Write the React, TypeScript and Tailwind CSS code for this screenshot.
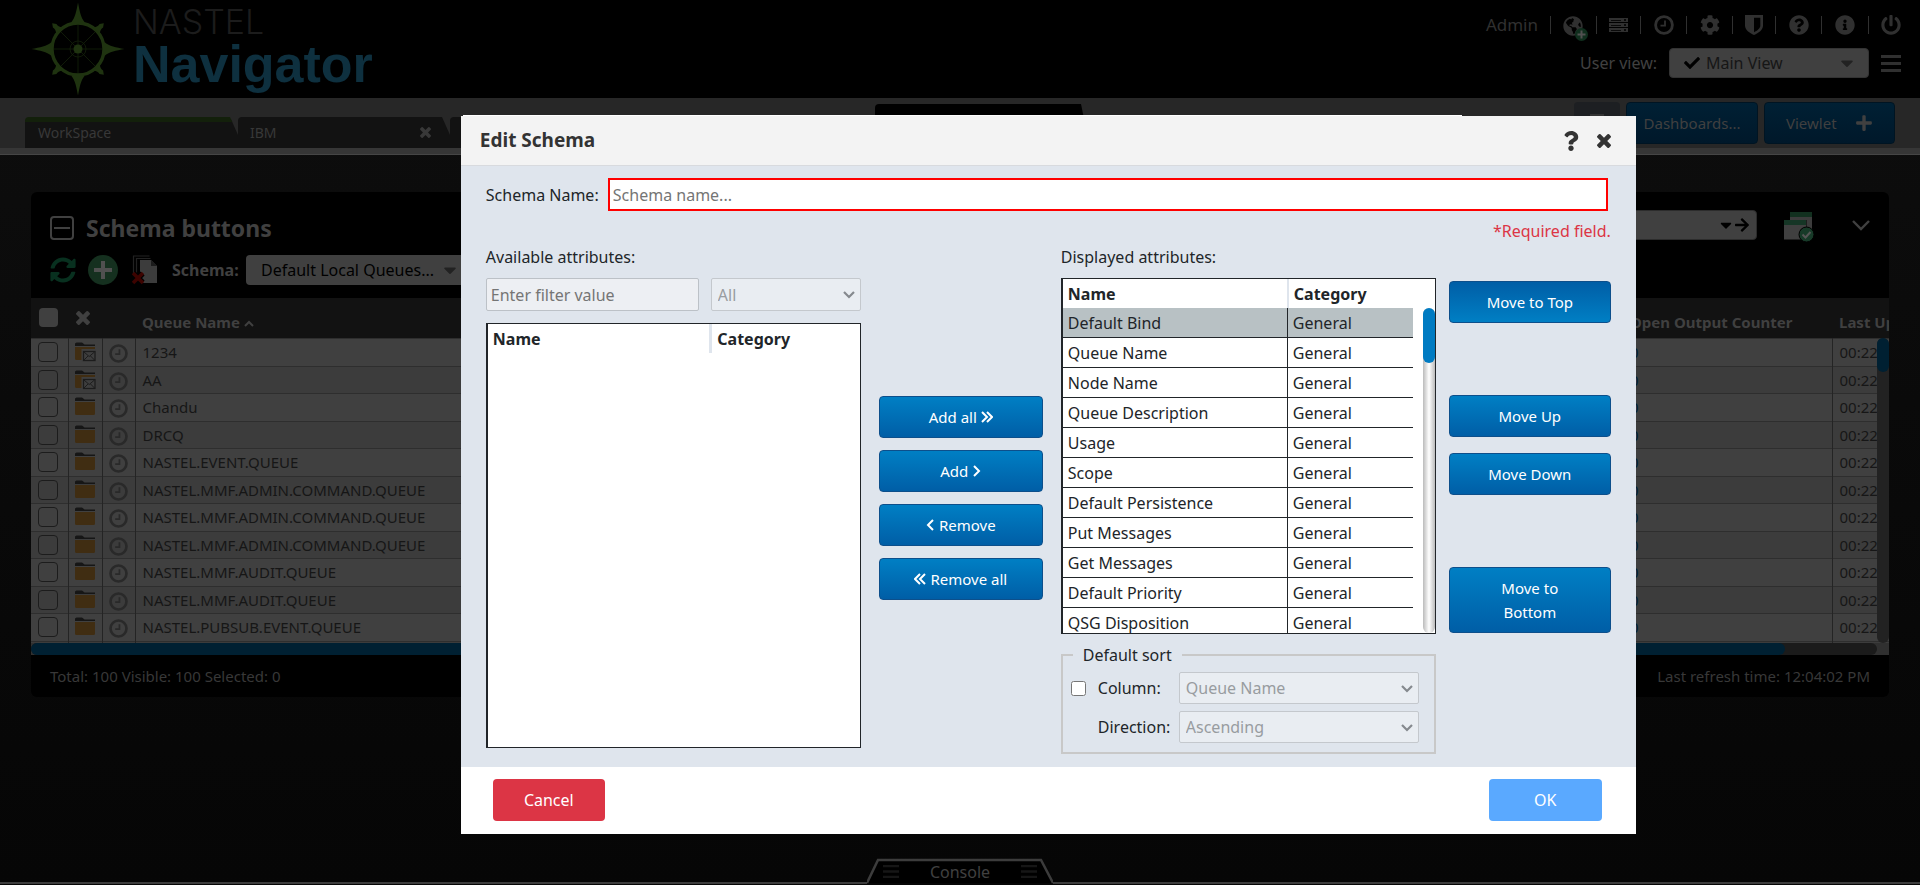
import React from "react";
import {
  FaCheck, FaCog, FaInfoCircle, FaPlus, FaPowerOff, FaQuestion, FaQuestionCircle,
  FaSyncAlt, FaArrowRight, FaCaretDown, FaGlobeAmericas,
} from "react-icons/fa";

function Cross({ className }: { className: string }) {
  return (
    <svg className={className} viewBox="110 366 1188 1188" fill="currentColor" aria-hidden="true">
      <path d="M1298 1322q0 40-28 68l-136 136q-28 28-68 28t-68-28l-294-294-294 294q-28 28-68 28t-68-28l-136-136q-28-28-28-68t28-68l294-294-294-294q-28-28-28-68t28-68l136-136q28-28 68-28t68 28l294 294 294-294q28-28 68-28t68 28l136 136q28 28 28 68t-28 68l-294 294 294 294q28 28 28 68z" />
    </svg>
  );
}

function Clock({ className }: { className: string }) {
  return (
    <svg className={className} viewBox="0 0 20 20" fill="none" stroke="currentColor" aria-hidden="true">
      <circle cx="10" cy="10" r="8.4" strokeWidth="2.8" />
      <path d="M11 5.5v5.2H6.5" strokeWidth="1.8" />
    </svg>
  );
}

function Bars({ className }: { className: string }) {
  return (
    <svg className={className} viewBox="0 0 20 17" fill="currentColor" preserveAspectRatio="none" aria-hidden="true">
      <path d="M0 0h20v3H0zM0 7h20v3H0zM0 14h20v3H0z" />
    </svg>
  );
}

function Servers() {
  return (
    <svg className="h-[15px] w-[19px]" viewBox="0 0 19 15" shapeRendering="crispEdges" aria-hidden="true">
      {[0, 5, 10].map((y) => (
        <g key={y}>
          <rect x="0" y={y} width="19" height="4" fill="#303030" />
          <rect x="2" y={y + 2} width="10" height="1" fill="#0a0a0a" />
          <rect x="15" y={y + 1} width="2" height="2" fill="#0a0a0a" />
        </g>
      ))}
    </svg>
  );
}

function Shield() {
  return (
    <svg className="h-5 w-[18px]" viewBox="0 0 18 20" aria-hidden="true">
      <path d="M0 0h18v10.500c0 4.500-4.500 7.500-9 9.500C4.500 18 0 15 0 10.500z" fill="currentColor" />
      <path d="M9 2.700h6.300v8c0 2.600-3 4.800-6.300 6.500z" fill="#000" />
    </svg>
  );
}

function Globe() {
  return (
    <svg className="h-[26px] w-[26px]" viewBox="0 0 26 26" aria-hidden="true">
      <FaGlobeAmericas x="0" y="0" size={20} color="#303030" />
      <circle cx="18.500" cy="18.500" r="6.500" fill="#0f2e1d" />
      <path d="M18.500 14.500v8M14.500 18.500h8" stroke="#505050" strokeWidth="2" />
    </svg>
  );
}

function Compass() {
  return (
    <svg className="h-[94px] w-[94px]" viewBox="-47 -47 94 94" fill="none" stroke="#1f3310" aria-hidden="true">
      <circle r="26" strokeWidth="3.400" />
      <g strokeWidth="0.800" opacity="0.65">
        <path d="M0-25V25M-25 0H25M-18-18L18 18M18-18L-18 18" />
        <circle r="8" />
      </g>
      <circle r="4.500" fill="#1f3310" stroke="none" />
      {[0, 90, 180, 270].map((a) => (
        <g key={a} transform={`rotate(${a})`} fill="#1f3310" stroke="none">
          <path d="M-6.500-27C-3-31-1.500-38 0-46.500 1.500-38 3-31 6.500-27z" />
          <path transform="rotate(45)" d="M-5-26C-2.500-28-2-31-2.500-33L0-36.500 2.500-33C2-31 2.500-28 5-26z" />
        </g>
      ))}
    </svg>
  );
}

function Folder({ mail }: { mail?: boolean }) {
  return (
    <svg className="mx-auto block h-[20px] w-[21px]" viewBox="0 0 21 20" aria-hidden="true">
      <path d="M0 4V1.500L1.500.5H7l2.500 2H20v1.500z" fill="#161616" />
      <path d="M0 5h20v11.500q0 1.500-1.500 1.500h-17Q0 18 0 16.500z" fill="#402d12" />
      {mail && (
        <g>
          <rect x="6.500" y="7" width="14.500" height="13" fill="#3e3e3e" />
          <rect x="8.500" y="9.500" width="11.500" height="9" fill="none" stroke="#1c1c1c" strokeWidth="1.200" />
          <path d="M9 10l5.200 4.500L19.500 10M9 18l4-4M19.500 18l-4-4" stroke="#1c1c1c" fill="none" />
        </g>
      )}
    </svg>
  );
}

function Documents() {
  return (
    <svg className="h-[30px] w-[26px]" viewBox="0 0 26 30" aria-hidden="true">
      <path d="M1.500 20V1h16M4.500 20V3.500h14" fill="none" stroke="#222" strokeWidth="1.200" />
      <path d="M8 5h11l6 6v17H8z" fill="#3c3c3c" />
      <path d="M19 5v6h6z" fill="#1b1b1b" />
      <path d="M1.500 18.500l9 9M10.500 18.500l-9 9" stroke="#000" strokeWidth="6" />
      <path d="M1 18l10 10M11 18L1 28" stroke="#3d0300" strokeWidth="3.600" />
    </svg>
  );
}

function Windows() {
  return (
    <svg className="h-[30px] w-[30px]" viewBox="0 0 30 30" aria-hidden="true">
      <path d="M6 0h22v20H6z" fill="#3c3c3c" />
      <path d="M6 0h22v5H6z" fill="#12301f" />
      <path d="M0 8h22.500v20H0z" fill="#000" />
      <path d="M0 8h22v19.500H0z" fill="#404040" />
      <path d="M0 8h22v5H0z" fill="#163626" />
      <circle cx="22.500" cy="22.500" r="7.500" fill="#173a28" stroke="#000" />
      <path d="M18.500 22.500l3 3 5-5.500" fill="none" stroke="#555" strokeWidth="2" />
    </svg>
  );
}

function Chevron({ d, className, box = "0 0 12 12", w = "2" }: { d: string; className: string; box?: string; w?: string }) {
  return (
    <svg className={className} viewBox={box} fill="none" stroke="currentColor" strokeWidth={w} aria-hidden="true">
      <path d={d} />
    </svg>
  );
}

const topIcons = [
  { name: "Servers", icon: <Servers />, w: "w-11" },
  { name: "Schedules", icon: <Clock className="h-5 w-5" />, w: "w-[46px]" },
  { name: "Settings", icon: <FaCog className="h-5 w-5" />, w: "w-[46px]" },
  { name: "Security", icon: <Shield />, w: "w-[43px]" },
  { name: "Help", icon: <FaQuestionCircle className="h-5 w-5" />, w: "w-[46px]" },
  { name: "About", icon: <FaInfoCircle className="h-5 w-5" />, w: "w-[47px]" },
];

const queues = [
  "1234", "AA", "Chandu", "DRCQ", "NASTEL.EVENT.QUEUE",
  "NASTEL.MMF.ADMIN.COMMAND.QUEUE", "NASTEL.MMF.ADMIN.COMMAND.QUEUE", "NASTEL.MMF.ADMIN.COMMAND.QUEUE",
  "NASTEL.MMF.AUDIT.QUEUE", "NASTEL.MMF.AUDIT.QUEUE", "NASTEL.PUBSUB.EVENT.QUEUE",
];

const attributes = [
  "Default Bind", "Queue Name", "Node Name", "Queue Description", "Usage", "Scope",
  "Default Persistence", "Put Messages", "Get Messages", "Default Priority", "QSG Disposition",
];

function Header() {
  return (
    <header className="flex h-[98px] justify-between bg-black">
      <div className="flex pl-[31px] pt-[2px]">
        <Compass />
        <div className="ml-2">
          <div className="mt-[3px] font-['Inter',sans-serif] text-[34px] font-light leading-[33px] text-[#1c1c1c]">NASTEL</div>
          <div className="font-['Liberation_Sans',sans-serif] text-[52px] font-bold leading-[52px] text-[#0e303f]">Navigator</div>
        </div>
      </div>
      <div className="pr-[19px] pt-3 text-[#303030]">
        <div className="flex h-[26px] items-center justify-end">
          <span className="pr-[12px] text-[17px]">Admin</span>
          <button aria-label="Add server" className="flex h-[18px] w-[46px] items-center justify-center border-l border-[#303030] pl-1 pt-2">
            <Globe />
          </button>
          {topIcons.map((t) => (
            <button key={t.name} aria-label={t.name} className={`flex h-[18px] items-center justify-center border-l border-[#303030] ${t.w}`}>
              {t.icon}
            </button>
          ))}
          <button aria-label="Log out" className="flex h-[18px] w-[33px] items-center justify-end border-l border-[#303030]">
            <FaPowerOff className="h-5 w-5" />
          </button>
        </div>
        <div className="mt-[10px] flex h-[30px] items-center justify-end">
          <span className="mr-3 text-[16px] text-[#404040]">User view:</span>
          <button className="flex h-[30px] w-[200px] items-center rounded border border-[#333] bg-[#404040] pl-[14px] pr-[13px] text-[16px] text-[#161616]">
            <FaCheck className="mr-[6px] h-4 w-4 text-black" />
            Main View
            <FaCaretDown className="ml-auto h-5 w-4 text-[#222]" />
          </button>
          <button aria-label="Menu" className="ml-3"><Bars className="h-[17px] w-5" /></button>
        </div>
      </div>
    </header>
  );
}

function TabBar() {
  const tab = "flex h-[31px] items-center rounded-tl bg-[#121212] text-[14px] text-[#383838] [clip-path:polygon(0_0,calc(100%-8px)_0,100%_18px,100%_100%,0_100%)]";
  return (
    <nav className="flex h-[57px] items-end justify-between border-b border-[#464646] bg-[linear-gradient(#272727_50px,#363636_50px)] pb-[6px] pl-[25px] pr-[25px]">
      <div className="flex flex-1">
        <a href="#workspace" className={`${tab} w-[213px] border-t-[5px] border-[#13200b] pb-[6px] pl-[13px]`}>WorkSpace</a>
        <a href="#ibm" className={`${tab} w-[212px] justify-between pl-3 pr-[19px]`}>
          IBM <Cross className="h-[11px] w-[11px]" />
        </a>
        <span className={`${tab} w-[213px]`} />
      </div>
      <div className="mr-[484px] h-[44px] w-[215px] self-end rounded-tl bg-black [clip-path:polygon(0_0,206px_0,100%_100%,0_100%)]" />
      <div className="flex gap-[6px] self-start pt-[4px] text-[16px] text-[#404040]">
        <button aria-label="Collapse" className="flex h-[42px] w-[46px] justify-center rounded bg-[#1d1f22] pt-3">
          <span className="h-[3px] w-[14px] bg-[#333]" />
        </button>
        <button className="h-[42px] w-[132px] rounded border border-[#001422] bg-linear-to-b from-[#002034] to-[#00182a] text-[15px]">Dashboards...</button>
        <button className="flex h-[42px] w-[131px] items-center justify-between rounded border border-[#001422] bg-linear-to-b from-[#002034] to-[#00182a] pl-[21px] pr-[21px] text-[15px]">
          Viewlet <FaPlus className="h-[18px] w-[18px]" />
        </button>
      </div>
    </nav>
  );
}

function Viewlet() {
  return (
    <section className="relative ml-[31px] mr-[31px] mt-[37px] overflow-hidden rounded-md bg-black">
      <div className="flex h-[106px] justify-between pl-[19px] pr-[19px] text-[#404040]">
        <div>
          <div className="mt-[18px] flex h-9 items-center">
            <button aria-label="Collapse viewlet" className="mr-3 flex h-6 w-6 items-center justify-center rounded border-2 border-[#404040]">
              <span className="h-[2px] w-4 bg-[#404040]" />
            </button>
            <h2 className="text-[23px] font-bold">Schema buttons</h2>
          </div>
          <div className="mt-[9px] flex h-[30px] items-center">
            <button aria-label="Refresh"><FaSyncAlt className="h-[26px] w-[26px] text-[#08301f]" /></button>
            <button aria-label="Add" className="ml-3 flex h-[30px] w-[30px] items-center justify-center rounded-full bg-[#15301f] text-[#505050]">
              <svg className="h-[18px] w-[18px]" viewBox="0 0 18 18" stroke="currentColor" strokeWidth="4" aria-hidden="true"><path d="M9 0v18M0 9h18" /></svg>
            </button>
            <button aria-label="Delete schema" className="ml-[14px]"><Documents /></button>
            <span className="ml-[14px] w-[74px] text-[16px] font-bold">Schema:</span>
            <button className="flex h-[30px] w-[300px] items-center rounded bg-[#404040] pl-[15px] text-[16px] text-black">
              Default Local Queues...
              <FaCaretDown className="ml-2 h-5 w-4 text-[#222]" />
            </button>
          </div>
        </div>
        <div className="flex h-[30px] items-center pt-[33px]">
          <button aria-label="Search" className="flex h-[30px] w-[400px] items-center justify-end rounded border border-[#2c2c2c] bg-[#404040] pr-[6px] text-black">
            <FaCaretDown className="h-[18px] w-4" />
            <FaArrowRight className="h-4 w-4" />
          </button>
          <button aria-label="Apply to windows" className="ml-[27px] mt-1"><Windows /></button>
          <button aria-label="Expand" className="ml-[38px]"><Chevron d="M1 1l8 8 8-8" box="0 0 18 11" w="2.4" className="h-[11px] w-[18px]" /></button>
        </div>
      </div>
      <div className="relative h-[357px] overflow-hidden bg-[#303030]">
        <div className="h-[345px] overflow-hidden">
          <table className="w-full table-fixed border-collapse text-[15px] text-[#161616]">
            <colgroup>
              <col className="w-[37px]" /><col className="w-[34px]" /><col className="w-[33px]" /><col />
              <col className="w-[209px]" /><col className="w-[57px]" />
            </colgroup>
            <thead className="h-10 border-b border-[#2e2e2e] bg-[#121212] text-left text-[#404040]">
              <tr className="h-10">
                <th className="pl-2"><input type="checkbox" aria-label="Select all" className="block h-[19px] w-[19px] appearance-none rounded-sm bg-[#404040]" /></th>
                <th className="pl-2"><Cross className="h-[14px] w-[14px]" /></th>
                <th />
                <th className="pl-[7px] pt-2 leading-5">Queue Name<Chevron d="M1 6l4-4 4 4" box="0 0 10 8" className="ml-1 inline h-2 w-[10px]" /></th>
                <th className="whitespace-nowrap pl-[7px] pt-2 leading-5">Open Output Counter</th>
                <th className="overflow-hidden whitespace-nowrap pl-[7px] pt-2 leading-5">Last Update</th>
              </tr>
            </thead>
            <tbody>
              {queues.map((q, i) => (
                <tr key={i} className="h-[28px] border-b border-[#2e2e2e] odd:bg-[#404040] even:h-[27px] even:bg-[#3c3c3c]">
                  <td className="border-r border-[#242424] pl-[7px]"><input type="checkbox" aria-label={q} className="block h-5 w-5 appearance-none rounded border border-[#1c1c1c]" /></td>
                  <td className="border-r border-[#242424]"><Folder mail={i < 2} /></td>
                  <td className="border-r border-[#242424]"><Clock className="mx-auto mt-[3px] block h-[19px] w-[19px] text-[#292929]" /></td>
                  <td className="pl-[7px] leading-5">{q}</td>
                  <td className="border-r border-[#242424] pl-[7px] leading-5 text-[#002038]">0</td>
                  <td className="overflow-hidden pl-[7px] leading-5">00:22</td>
                </tr>
              ))}
              <tr className="h-[28px] bg-[#3c3c3c]"><td className="border-r border-[#242424]" /><td className="border-r border-[#242424]" /><td className="border-r border-[#242424]" /><td /><td className="border-r border-[#242424]" /><td /></tr>
            </tbody>
          </table>
        </div>
        <div className="absolute right-0 top-10 h-[305px] w-3 rounded-md bg-[#222]"><div className="h-[34px] rounded-md bg-[#002032]" /></div>
        <div className="mr-3 h-3 rounded-md bg-[#1b1b1b]"><div className="h-3 w-[95%] rounded-md bg-[#002032]" /></div>
      </div>
      <footer className="flex h-[42px] items-center justify-between pl-[19px] pr-[19px] text-[15px] text-[#383838]">
        <span>Total: 100 Visible: 100 Selected: 0</span>
        <span>Last refresh time: 12:04:02 PM</span>
      </footer>
    </section>
  );
}

function ActionButton({ children, flip, tall }: { children: React.ReactNode; flip?: boolean; tall?: boolean }) {
  return (
    <button
      className={`flex w-full items-center justify-center gap-1 rounded border border-[#0d4f8b] text-[15px] leading-6 text-white ${tall ? "h-[66px] px-10" : "h-[42px]"} ${flip ? "bg-linear-to-t" : "bg-linear-to-b"} from-[#007fc4] to-[#005ea6]`}
    >
      {children}
    </button>
  );
}

function DisabledSelect({ label, id, value, className }: { label: string; id: string; value: string; className: string }) {
  return (
    <div className={`relative ${className}`}>
      <select id={id} aria-label={label} disabled className="h-full w-full appearance-none rounded-xs border border-[#c4c8cd] bg-[#e9edf2] pl-[6px] text-[16px] text-[#989ca0]">
        <option>{value}</option>
      </select>
      <Chevron d="M1 2l5 5 5-5" box="0 0 12 9" w="2.2" className="pointer-events-none absolute right-[6px] top-3 h-[9px] w-3 text-[#85898e]" />
    </div>
  );
}

function SchemaDialog() {
  const head = "h-[29px] px-[5px] text-left font-bold";
  return (
    <div className="fixed inset-0 pl-[24%] pt-[115px]">
      <div role="dialog" aria-label="Edit Schema" className="w-[1175px] text-[16px] text-[#212529]">
        <div className="ml-[2px] h-px w-[85%] bg-white" />
        <div className="flex h-[50px] items-center border-b border-[#d8dade] bg-[#f3f3f3] pl-[19px] pr-[25px] text-[#333]">
          <h1 className="mr-auto text-[19px] font-bold">Edit Schema</h1>
          <button aria-label="Help"><FaQuestion className="h-5 w-4" /></button>
          <button aria-label="Close" className="ml-[18px]"><Cross className="h-[14px] w-[14px]" /></button>
        </div>
        <div className="h-[601px] bg-[#dfe5ed] pl-[25px] pr-[25px] pt-3">
          <div className="flex h-[33px] items-center">
            <label htmlFor="schema" className="w-[122px]">Schema Name:</label>
            <input id="schema" placeholder="Schema name..." className="mr-[3px] h-[33px] flex-1 border-2 border-[#f00] bg-white px-[3px] placeholder:text-[#757575]" />
          </div>
          <p className="mt-2 text-right leading-6 text-[#dc3545]">*Required field.</p>
          <div className="mt-[2px] grid grid-cols-[minmax(0,1fr)_200px_minmax(0,1fr)_175px]">
            <div>
              <p className="mb-[9px] leading-6">Available attributes:</p>
              <div className="flex h-[33px] gap-3">
                <input disabled aria-label="Filter" placeholder="Enter filter value" className="min-w-0 flex-1 rounded-xs border border-[#bcc1c7] bg-[#edeff3] px-1 placeholder:text-[#757575]" />
                <DisabledSelect id="category" label="Category" value="All" className="w-[150px]" />
              </div>
              <div className="mt-3 h-[425px] border border-l-2 border-[#212529] bg-white">
                <table className="w-full table-fixed">
                  <thead><tr>
                    <th className={head}>Name</th>
                    <th className={`${head} w-[149px] border-l-[3px] border-[#dfe5ed]`}>Category</th>
                  </tr></thead>
                </table>
              </div>
            </div>
            <div className="flex flex-col gap-3 px-[18px] pt-[151px]">
              <ActionButton>Add all <Chevron d="M1 1l5 5-5 5M6 1l5 5-5 5" className="h-3 w-3" /></ActionButton>
              <ActionButton>Add <Chevron d="M2 1l5 5-5 5" box="0 0 9 12" className="h-3 w-[9px]" /></ActionButton>
              <ActionButton><Chevron d="M7 1L2 6l5 5" box="0 0 9 12" className="h-3 w-[9px]" /> Remove</ActionButton>
              <ActionButton><Chevron d="M6 1L1 6l5 5M11 1L6 6l5 5" className="h-3 w-3" /> Remove all</ActionButton>
            </div>
            <div>
              <p className="mb-[9px] leading-6">Displayed attributes:</p>
              <div className="relative h-[356px] overflow-hidden border border-l-2 border-[#212529] bg-white pr-[22px]">
                <table className="w-full table-fixed border-separate border-spacing-0">
                  <thead><tr>
                    <th className={head}>Name</th>
                    <th className={`${head} w-[126px] border-l-2 border-[#dfe5ed]`}>Category</th>
                  </tr></thead>
                  <tbody>
                    {attributes.map((a) => (
                      <tr key={a} className="h-[30px] first:bg-[#b8c1c4]">
                        <td className="border-b border-[#212529] px-[5px] py-0 leading-6">{a}</td>
                        <td className="border-b border-l border-[#212529] px-[5px] py-0 leading-6">General</td>
                      </tr>
                    ))}
                  </tbody>
                </table>
                <div className="absolute bottom-0 right-0 top-[29px] w-3 rounded-md bg-linear-to-r from-[#bbb] via-white to-[#bbb]">
                  <div className="h-[55px] rounded-md bg-[#007bc2]" />
                </div>
              </div>
              <fieldset className="mt-[9px] h-[111px] min-w-0 border-2 border-[#c8c8c8] pl-2 pt-[5px]">
                <legend className="ml-[2px] px-[10px] leading-6">Default sort</legend>
                <div className="flex h-8 items-center">
                  <input id="column" type="checkbox" className="h-[15px] w-[15px]" />
                  <label htmlFor="column" className="ml-3 w-[81px]">Column:</label>
                  <DisabledSelect id="sort" label="Sort column" value="Queue Name" className="h-8 w-[240px]" />
                </div>
                <div className="mt-[7px] flex h-8 items-center">
                  <label htmlFor="direction" className="ml-[27px] w-[81px]">Direction:</label>
                  <DisabledSelect id="direction" label="Direction" value="Ascending" className="h-8 w-[240px]" />
                </div>
              </fieldset>
            </div>
            <div className="flex flex-col pl-[13px] pt-9">
              <ActionButton flip>Move to Top</ActionButton>
              <div className="mb-[72px] mt-[72px] flex flex-col gap-4">
                <ActionButton>Move Up</ActionButton>
                <ActionButton>Move Down</ActionButton>
              </div>
              <ActionButton tall>Move to Bottom</ActionButton>
            </div>
          </div>
        </div>
        <div className="flex h-[67px] items-center justify-between bg-white pb-[6px] pl-8 pr-[34px] pt-1 text-white">
          <button className="h-[42px] w-[112px] rounded bg-[#dc3545]">Cancel</button>
          <button className="h-[42px] w-[113px] rounded bg-[#5aa9ff]">OK</button>
        </div>
      </div>
    </div>
  );
}

export default function App() {
  return (
    <div className="flex min-h-screen flex-col bg-linear-to-b from-[#0e0e0e] to-[#060606] font-['Noto_Sans','Open_Sans',sans-serif]">
      <Header />
      <TabBar />
      <Viewlet />
      <div className="mt-auto flex h-[27px] items-end">
        <div className="mb-px h-[2px] flex-1 bg-[#3c3c3c]" />
        <button className="relative flex h-[27px] w-[186px] items-center justify-between px-4 text-[16px] text-[#404040]">
          <svg className="absolute inset-0 h-full w-full" viewBox="0 0 186 27" aria-hidden="true">
            <path d="M0 25L11 2H174L186 25" fill="#000" stroke="#3c3c3c" strokeWidth="2.500" />
          </svg>
          <Bars className="relative h-[13px] w-4 text-[#161616]" />
          <span className="relative">Console</span>
          <Bars className="relative h-[13px] w-4 text-[#161616]" />
        </button>
        <div className="mb-px h-[2px] flex-1 bg-[#3c3c3c]" />
      </div>
      <SchemaDialog />
    </div>
  );
}
